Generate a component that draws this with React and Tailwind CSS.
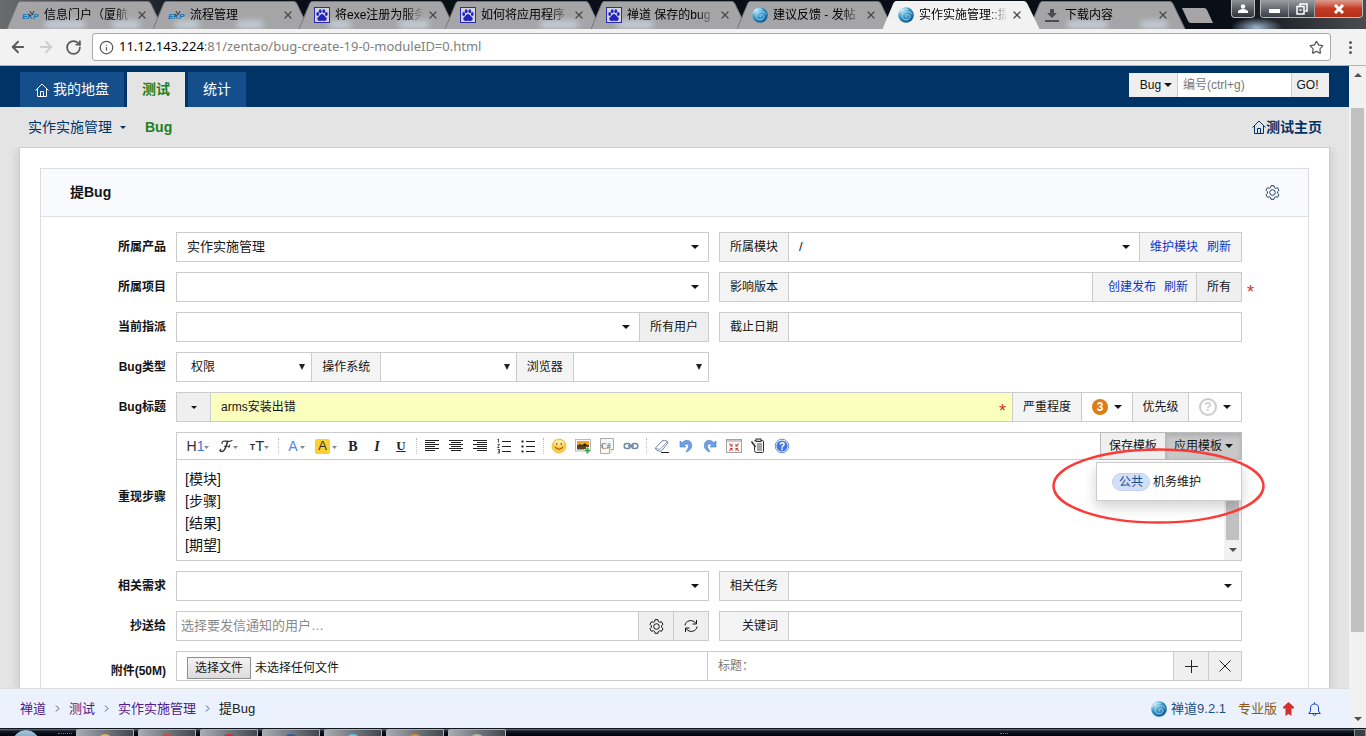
import { ArrowLeft, ArrowRight, Info, RotateCw, Star, X } from 'lucide-react';

function PawIcon() {
  return (
    <svg width="16" height="16" viewBox="0 0 16 16" className="shrink-0">
      <rect x="0.5" y="0.5" width="15" height="15" fill="#d4d4dc" stroke="#2a2ab4" />
      <g fill="#2126c0">
        <ellipse cx="3.7" cy="7" rx="1.4" ry="1.9" />
        <ellipse cx="6.2" cy="4.2" rx="1.4" ry="1.9" />
        <ellipse cx="9.8" cy="4.2" rx="1.4" ry="1.9" />
        <ellipse cx="12.3" cy="7" rx="1.4" ry="1.9" />
        <path d="M8 7c1.2 0 1.9 1.1 2.7 2 .9.9 2.1 1.6 2 3-.1 1.6-1.5 2-2.7 1.900-.8-.1-1.3-.2-2-.2s-1.2.1-2 .2c-1.2.1-2.600-.3-2.700-1.900-.1-1.400 1.100-2.100 2-3 .8-.9 1.500-2 2.700-2z" />
      </g>
    </svg>
  );
}

function SwirlIcon() {
  return (
    <svg width="16" height="16" viewBox="0 0 16 16" className="shrink-0">
      <defs>
        <radialGradient id="swirl" cx="0.25" cy="0.2" r="0.95">
          <stop offset="0" stopColor="#c5e8f5" />
          <stop offset="0.45" stopColor="#3f9fcb" />
          <stop offset="1" stopColor="#064a8c" />
        </radialGradient>
      </defs>
      <circle cx="8" cy="8" r="7.8" fill="url(#swirl)" />
      <path d="M14 7.500C12.500 3.800 6.500 3.500 4.600 7.200c-1.200 3 1 6 4.400 5.500 2.600-.4 3.800-3 2.300-4.500-1.300-1.200-3.400-.5-3.400 1 0 .8.900 1.200 1.500.7" fill="none" stroke="#a9dcf0" strokeWidth="0.9" />
      <path d="M1 6.5C2.500 3 6.500 1.500 10 2.5" fill="none" stroke="#e3f5fb" opacity="0.7" />
    </svg>
  );
}

function EkpIcon() {
  return (
    <svg width="17" height="14" viewBox="0 0 17 14" className="shrink-0">
      <text x="0" y="11" fontSize="8" fontWeight="700" fontStyle="italic" fontFamily="Liberation Sans, sans-serif" fill="#1478bd">EKP</text>
      <path d="M6 6l3 2M8 3l1.5 3M12 3l-2 4" stroke="#333" />
    </svg>
  );
}

function DownloadIcon() {
  return (
    <svg width="16" height="16" viewBox="0 0 16 16" className="shrink-0" fill="#4c4c4c">
      <path d="M6 2h4v4h3L8 11 3 6h3zM1 13h14v2H1z" />
    </svg>
  );
}

const favicons = { ekp: EkpIcon, paw: PawIcon, swirl: SwirlIcon, download: DownloadIcon };

// glow: where the desktop shines through the glass of a tab
const browserTabs = [
  { title: '信息门户（厦航', icon: 'ekp', glow: [[38, 40], [105, 28]] },
  { title: '流程管理', icon: 'ekp', glow: [[22, 24], [84, 26]] },
  { title: '将exe注册为服务', icon: 'paw', glow: [[30, 22], [100, 30]] },
  { title: '如何将应用程序', icon: 'paw', glow: [[95, 38]] },
  { title: '禅道 保存的bug', icon: 'paw', glow: [[26, 36]] },
  { title: '建议反馈 - 发帖', icon: 'swirl' },
  { title: '实作实施管理::提', icon: 'swirl', active: true },
  { title: '下载内容', icon: 'download', glow: [[38, 40], [112, 26]] },
];

function BrowserTab({ title, icon, active, glow = [] }) {
  const Icon = favicons[icon];
  return (
    <div className={`relative -mr-[14px] h-7 w-[160px] shrink-0 ${active ? 'z-10' : ''}`}>
      <svg className="absolute inset-0 h-full w-full" viewBox="0 0 160 28" preserveAspectRatio="none">
        <path d="M0 28L11 2Q12 .5 13 .5H141Q143 .5 144 3L156 28" fill={active ? '#f2f2f2' : '#a5a5a7'} stroke={active ? '#f2f2f2' : '#77777a'} />
        {glow.map(([x, width]) => <rect key={x} x={x} y="20" width={width} height="7" rx="3" fill="#c9d3dc" className="blur-[3px]" />)}
      </svg>
      <div className="relative flex h-full items-center pl-[15px]">
        <Icon />
        <span className="ml-[5px] w-[88px] mask-r-from-80% text-[12px] whitespace-nowrap text-black">{title}</span>
        <button aria-label={`关闭 ${title}`} className="ml-1"><X size={12} strokeWidth={2.5} className="text-[#4a4a4a]" /></button>
      </div>
    </div>
  );
}

function WindowControls() {
  return (
    <div className="mr-[3px] ml-auto flex h-[18px] gap-[5px] self-start">
      <button aria-label="用户" className="flex w-6 items-center justify-center rounded-b border border-t-0 border-[#b9bcc0] bg-linear-to-b from-[#8d9298] to-[#2f343b]">
        <svg width="10" height="9" viewBox="0 0 10 9" fill="#fff"><circle cx="5" cy="2.5" r="2.2" /><path d="M0 9V7q2-2 5-2t5 2v2z" /></svg>
      </button>
      <div className="flex overflow-hidden rounded-b border border-t-0 border-[#b9bcc0]">
        <button aria-label="最小化" className="flex w-7 items-center justify-center border-r border-[#9a9da1] bg-linear-to-b from-[#9a9ea3] to-[#3a3f45]">
          <span className="mt-1 h-1 w-[11px] bg-white" />
        </button>
        <button aria-label="还原" className="flex w-[26px] items-center justify-center border-r border-[#9a9da1] bg-linear-to-b from-[#9a9ea3] to-[#3a3f45]">
          <svg width="12" height="12" viewBox="0 0 12 12" fill="none" stroke="#fff" strokeWidth="1.5"><path d="M4 3V1h7v7H9" /><rect x="1" y="3.5" width="7" height="7.5" /><path d="M3.5 7h2" /></svg>
        </button>
        <button aria-label="关闭" className="flex w-[47px] items-center justify-center bg-linear-to-b from-[#dc9a8d] via-[#c23a22] to-[#b5301a]">
          <svg width="12" height="10" viewBox="0 0 12 10"><path d="M2 1l8 8M10 1L2 9" stroke="#fff" strokeWidth="3" /></svg>
        </button>
      </div>
    </div>
  );
}

function BrowserChrome() {
  return (
    <header className="shrink-0">
      <div className="flex h-[29px] items-end bg-[radial-gradient(ellipse_22px_12px_at_75%_90%,#8fa9c4,transparent),radial-gradient(ellipse_26px_10px_at_92%_95%,#9fb4cc,transparent),linear-gradient(to_right,#6a6d70,#0a0e16_15%,#0a0e16_90%,#4a4d50)] pl-[7px]">
        {browserTabs.map((tab) => <BrowserTab key={tab.title} {...tab} />)}
        <svg width="34" height="17" viewBox="0 0 34 17" className="mb-[5px] ml-1.5 shrink-0">
          <path d="M1 1h22q2 0 3 2l6 13H10q-2 0-3-2z" fill="#a5a5a7" />
        </svg>
        <WindowControls />
      </div>
      <div className="flex h-[37px] items-center border-b border-[#b4b4b4] bg-[#f2f2f2] pr-3">
        <button aria-label="后退" className="ml-[9px]"><ArrowLeft size={18} strokeWidth={2.5} className="text-[#5a5a5a]" /></button>
        <button aria-label="前进" className="ml-2.5"><ArrowRight size={18} strokeWidth={2.5} className="text-[#cfcfcf]" /></button>
        <button aria-label="刷新" className="ml-2.5"><RotateCw size={17} strokeWidth={2.5} className="text-[#5a5a5a]" /></button>
        <div className="ml-2.5 flex h-7 flex-1 items-center rounded-[3px] border border-[#a9a9a9] bg-white px-1.5">
          <Info size={15} className="text-[#5a5a5a]" />
          <div className="ml-[5px] flex-1 font-['Noto_Sans',sans-serif] text-[13px] text-[#808080]">
            <span className="text-black">11.12.143.224</span>:81/zentao/bug-create-19-0-moduleID=0.html
          </div>
          <button aria-label="收藏"><Star size={15} className="text-[#5a5a5a]" /></button>
        </div>
        <button aria-label="菜单" className="ml-[15px] flex w-2 flex-col items-center gap-[2px]">
          <span className="size-[3px] rounded-full bg-[#5a5a5a]" />
          <span className="size-[3px] rounded-full bg-[#5a5a5a]" />
          <span className="size-[3px] rounded-full bg-[#5a5a5a]" />
        </button>
      </div>
    </header>
  );
}

function Caret({ small }) {
  return small
    ? <svg width="6" height="3" viewBox="0 0 6 3" className="inline-block shrink-0 fill-current"><path d="M0 0h6L3 3z" /></svg>
    : <svg width="8" height="4" viewBox="0 0 8 4" className="inline-block shrink-0 fill-current"><path d="M0 0h8L4 4z" /></svg>;
}

function HomeIcon() {
  return (
    <svg width="14" height="14" viewBox="0 0 14 14" fill="none" stroke="currentColor" className="shrink-0">
      <path d="M.5 7.5L7 1l6.5 6.5M2.5 6v7.5h9V6M5.5 13.5v-5h3v5" />
    </svg>
  );
}

function GearIcon() {
  return (
    <svg width="15" height="15" viewBox="0 0 15 15" fill="none" stroke="currentColor">
      <path d="M6 .7h3l.4 1.900 1.200.7 1.900-.6 1.500 2.600-1.400 1.400v1.600l1.400 1.400-1.500 2.600-1.900-.6-1.200.7-.4 1.900H6l-.4-1.900-1.200-.7-1.900.6L1 9.700l1.400-1.400V6.700L1 5.300l1.500-2.600 1.900.6 1.200-.7z" strokeLinejoin="round" />
      <circle cx="7.5" cy="7.5" r="2.8" />
    </svg>
  );
}

function Group({ children }) {
  return <div className="flex h-[30px] min-w-0 flex-1 divide-x divide-[#ccc] border border-[#ccc] bg-white">{children}</div>;
}

function Cell({ children, htmlFor }) {
  return <label htmlFor={htmlFor} className="flex w-[69px] shrink-0 items-center justify-end bg-[#f4f4f4] pr-2.5">{children}</label>;
}

function Picker({ id, value = '', native }) {
  return (
    <div className="relative flex min-w-0 flex-1">
      <select id={id} className={`w-full appearance-none bg-transparent outline-none ${native ? 'pl-[14px] text-[12px]' : 'pl-2.5 text-[13px]'}`}>
        <option>{value}</option>
      </select>
      <span className={`pointer-events-none absolute inset-y-0 flex items-center ${native ? 'right-1.5' : 'right-[9px]'}`}>
        {native ? <svg width="6" height="6" viewBox="0 0 6 6"><path d="M0 0h6L3 6z" fill="#222" /></svg> : <Caret />}
      </span>
    </div>
  );
}

function Row({ label, htmlFor, children, className = 'items-center' }) {
  return (
    <div className={`flex ${className}`}>
      <label htmlFor={htmlFor} className="w-[125px] shrink-0 text-right font-bold">{label}</label>
      <div className="ml-2.5 min-w-0 flex-1">{children}</div>
    </div>
  );
}

function Pair({ children }) {
  return <div className="grid grid-cols-[533fr_523fr] gap-2.5">{children}</div>;
}

const greyButton = 'flex shrink-0 items-center justify-center bg-[#efefef]';

function Tool({ label, wide, children }) {
  return <button type="button" aria-label={label} className={`flex h-full shrink-0 items-center justify-center ${wide || 'w-6'}`}>{children}</button>;
}

function Separator() {
  return <span className="flex h-4 w-[7px] shrink-0 justify-center"><span className="border-l border-dotted border-[#bbb]" /></span>;
}

function Lines({ rows }) {
  return (
    <svg width="16" height="16" viewBox="0 0 16 16" fill="none" stroke="#222" shapeRendering="crispEdges">
      {rows.map(([x1, x2], i) => <path key={i} d={`M${x1} ${2.5 + i * 2}H${x2}`} />)}
    </svg>
  );
}

const toolCaret = <svg width="5" height="3" viewBox="0 0 5 3" className="mt-0.5 shrink-0"><path d="M0 0h5L2.5 3z" fill="#888" /></svg>;

function EditorToolbar() {
  return (
    <div className="flex h-[27px] items-center border-b border-[#ccc] pl-1.5">
      <Tool label="标题" wide="w-[30px]"><span className="text-[14px] text-[#333]">H<span className="text-[#3a78e0]">1</span></span>{toolCaret}</Tool>
      <Tool label="字体" wide="w-[31px]">
        <svg width="14" height="14" viewBox="0 0 14 14" fill="none" stroke="#333" strokeLinecap="round">
          <path d="M3 4.5C3 2 5 1.800 7 2.200s4 .5 6-.7" strokeWidth="1.2" /><path d="M8.5 2.5C7.5 6 6.5 12 3 12.5c-1.5.2-2.200-.8-1.5-1.800" strokeWidth="1.6" /><path d="M5.5 7.3h5M10.8 6l-.8 2.5" />
        </svg>
        {toolCaret}
      </Tool>
      <Tool label="字号" wide="w-[31px]"><span className="mt-1 text-[9px] font-bold text-[#333]">T</span><span className="text-[15px] text-[#333]">T</span>{toolCaret}</Tool>
      <Separator />
      <Tool label="文字颜色" wide="w-[29px]"><span className="mr-0.5 text-[14px] text-[#4a86ee]">A</span>{toolCaret}</Tool>
      <Tool label="背景颜色" wide="w-[30px]"><span className="mr-0.5 flex size-[15px] items-center justify-center rounded-[2px] bg-[#fdd02f] text-[13px] text-[#333]">A</span>{toolCaret}</Tool>
      <Tool label="粗体"><span className="font-['Liberation_Serif',serif] text-[14px] font-black text-[#222]">B</span></Tool>
      <Tool label="斜体"><span className="font-['Liberation_Serif',serif] text-[14px] font-bold text-[#222] italic">I</span></Tool>
      <Tool label="下划线"><span className="font-['Liberation_Serif',serif] text-[13px] font-bold text-[#222] underline">U</span></Tool>
      <Separator />
      <Tool label="左对齐"><Lines rows={[[1, 15], [1, 11], [1, 15], [1, 11], [1, 15], [1, 11]]} /></Tool>
      <Tool label="居中"><Lines rows={[[1, 15], [3, 13], [1, 15], [3, 13], [1, 15], [3, 13]]} /></Tool>
      <Tool label="右对齐"><Lines rows={[[1, 15], [5, 15], [1, 15], [5, 15], [1, 15], [5, 15]]} /></Tool>
      <Tool label="编号">
        <svg width="16" height="16" viewBox="0 0 16 16" fill="none" stroke="#222">
          <path d="M6 3.5h9M6 8.5h9M6 13.5h9" />
          <path d="M1.5 1.5l1-.5v3.5M1.5 6.5h2L1.5 9.5h2M1.5 11.5h2v3.5h-2M2 13.2h1.5" strokeWidth="0.8" />
        </svg>
      </Tool>
      <Tool label="项目符号">
        <svg width="16" height="16" viewBox="0 0 16 16" stroke="#222">
          <path d="M6 3.5h9M6 8.5h9M6 13.5h9" />
          <path d="M1.5 2.5h2v2h-2zM1.5 7.5h2v2h-2zM1.5 12.5h2v2h-2z" fill="#222" stroke="none" />
        </svg>
      </Tool>
      <Separator />
      <Tool label="表情">
        <svg width="16" height="16" viewBox="0 0 16 16">
          <circle cx="8" cy="8" r="7" fill="#fbcb42" stroke="#e8a93c" strokeWidth="0.6" /><ellipse cx="8" cy="5" rx="5" ry="3" fill="#fde9a0" />
          <path d="M5.8 5v2M10.2 5v2M4 9q4 4.5 8 0" stroke="#7a4a10" strokeWidth="1.1" fill="none" />
        </svg>
      </Tool>
      <Tool label="图片">
        <svg width="16" height="16" viewBox="0 0 16 16">
          <rect x="0.5" y="1.5" width="15" height="11.5" fill="#fff" stroke="#b8b8b8" /><rect x="2" y="3" width="12" height="5" fill="#efa91e" /><rect x="2" y="7" width="12" height="4.5" fill="#5b4220" /><path d="M3 7.5l2-1 2 1 3-2 2 2" stroke="#5b4220" />
          <path d="M12.5 9v7M9 12.5h7" stroke="#fff" strokeWidth="3" /><path d="M12.5 9.500v6M9.500 12.500h6" stroke="#3da54a" strokeWidth="2" />
        </svg>
      </Tool>
      <Tool label="代码">
        <svg width="16" height="16" viewBox="0 0 16 16">
          <path d="M1.5.5h13v11l-4 4h-9z" fill="#f7f7f5" stroke="#aaa" /><path d="M14.5 11.5h-4v4" fill="#fff" stroke="#aaa" />
          <text x="2" y="10.5" fontSize="8" fontWeight="700" fontFamily="Liberation Serif, serif" fill="#8f6a3a">C#</text>
        </svg>
      </Tool>
      <Tool label="链接">
        <svg width="16" height="16" viewBox="0 0 16 16" fill="none" stroke="#6f86a8" strokeWidth="1.5">
          <rect x="1.2" y="5.5" width="6" height="5" rx="2.5" /><rect x="8.8" y="5.5" width="6" height="5" rx="2.5" /><path d="M5 8h6" />
        </svg>
      </Tool>
      <Separator />
      <Tool label="清除格式">
        <svg width="16" height="16" viewBox="0 0 16 16">
          <path d="M1.5 10L8 3q1-.8 2.500-.6l2.500.8q1.500.6.7 2L8 12.500q-1 1-2.500.8L2.500 12q-1.500-.8-1-2z" fill="#fff" stroke="#7484a8" /><path d="M2 10.5l4 1 7-7.5" fill="none" stroke="#7484a8" strokeWidth="0.8" /><path d="M7 14.500h8" stroke="#222" />
        </svg>
      </Tool>
      <Tool label="撤销">
        <svg width="16" height="16" viewBox="0 0 16 16"><path d="M2 3v6h6L6.200 7C9 5 11.500 6.500 10.300 9.800L8 14c5-1.600 6.700-5.500 5.200-9C11.500 1.500 7 1.500 4.200 4.800z" fill="#6d9ee8" stroke="#4a7cc9" strokeWidth="0.6" /></svg>
      </Tool>
      <Tool label="重做">
        <svg width="16" height="16" viewBox="0 0 16 16"><path d="M14 3v6H8l1.800-2C7 5 4.500 6.500 5.700 9.800L8 14C3 12.400 1.300 8.500 2.800 5 4.500 1.500 9 1.500 11.800 4.800z" fill="#6d9ee8" stroke="#4a7cc9" strokeWidth="0.6" /></svg>
      </Tool>
      <Tool label="全屏">
        <svg width="16" height="16" viewBox="0 0 16 16">
          <rect x="0.5" y="1.5" width="15" height="13" fill="#fafafa" stroke="#a3a3a3" /><path d="M1 3h14" stroke="#c9c9c9" strokeWidth="2" />
          <path d="M3 5.500l2.500 2M13 5.500l-2.500 2M3 13l2.500-2M13 13l-2.500-2" stroke="#c63a2e" /><path d="M6.500 5.500v3h-3zM9.500 5.500v3h3zM6.500 13v-3h-3zM9.500 13v-3h3z" fill="#c63a2e" />
        </svg>
      </Tool>
      <Tool label="源码">
        <svg width="16" height="16" viewBox="0 0 16 16" fill="none" stroke="#333">
          <path d="M4.500 2.500h8q1 0 1 1v10q0 1-1 1h-6q-2 0-2-2V8" fill="#f1f1f1" /><rect x="6" y="1" width="5" height="2.500" fill="#ccc" /><path d="M7 6h5M7 8h5M7 10h5M7 12h5" strokeWidth="0.8" /><path d="M1.500 3.500l4 5.500" strokeWidth="1.6" />
        </svg>
      </Tool>
      <Tool label="帮助">
        <svg width="16" height="16" viewBox="0 0 16 16">
          <circle cx="8" cy="8" r="6.8" fill="#fff" stroke="#3a6fd0" strokeWidth="0.8" /><circle cx="8" cy="8" r="5.6" fill="#3f78dc" />
          <text x="5" y="11.8" fontSize="10" fontWeight="700" fontFamily="Liberation Sans, sans-serif" fill="#fff">?</text>
        </svg>
      </Tool>
    </div>
  );
}

function Editor() {
  return (
    <div className="relative h-[129px] border border-[#ccc]">
      <EditorToolbar />
      <div className="flex h-[100px]">
        <div className="flex-1 pt-2 pl-2 text-[14px] leading-[22px]">
          <p>[模块]</p>
          <p>[步骤]</p>
          <p>[结果]</p>
          <p>[期望]</p>
        </div>
        <div className="flex w-[17px] flex-col items-center bg-[#f1f1f1] pt-4 text-[#505050]">
          <div className="h-16 w-[13px] bg-[#c1c1c1]" />
          <div className="flex flex-1 items-center"><Caret /></div>
        </div>
      </div>
      <div className="absolute -top-px -right-px flex h-7 border border-[#bbb]">
        <button type="button" className="w-[65px] border-r border-[#bbb] bg-[#efefef]">保存模板</button>
        <button type="button" className="flex w-[75px] items-center justify-center gap-[3px] bg-[#c8c8c8] shadow-[inset_0_3px_5px_rgba(0,0,0,0.125)]">应用模板<Caret /></button>
      </div>
      <div className="absolute top-[29px] -right-px flex h-[39px] w-[146px] items-center border border-[#ccc] bg-white pl-[15px] shadow-[0_6px_12px_rgba(0,0,0,0.18)]">
        <span className="rounded-full border border-[#c3d1ee] bg-[#d1dff8] px-1.5 leading-4 text-[#1a4f8f]">公共</span>
        <a href="#template" className="ml-[3px]">机务维护</a>
      </div>
      <svg width="213" height="76" viewBox="0 0 213 76" className="pointer-events-none absolute top-[15px] -right-6">
        <ellipse cx="106.5" cy="38" rx="105" ry="36.5" fill="none" stroke="#fb3b37" strokeWidth="2.5" />
      </svg>
    </div>
  );
}

function BugForm() {
  return (
    <form className="flex flex-col gap-2.5 pt-[15px] pr-[66px]" onSubmit={(e) => e.preventDefault()}>
      <Row label="所属产品" htmlFor="product">
        <Pair>
          <Group><Picker id="product" value="实作实施管理" /></Group>
          <Group>
            <Cell htmlFor="module">所属模块</Cell>
            <Picker id="module" value="/" />
            <div className="flex items-center gap-[9px] bg-[#f4f4f4] px-2.5 text-[#0a39c9]">
              <a href="#module">维护模块</a><a href="#refresh">刷新</a>
            </div>
          </Group>
        </Pair>
      </Row>
      <Row label="所属项目" htmlFor="project">
        <Pair>
          <Group><Picker id="project" /></Group>
          <div className="relative flex">
            <Group>
              <Cell htmlFor="build">影响版本</Cell>
              <input id="build" className="min-w-0 flex-1 px-2 outline-none" />
              <div className="flex items-center gap-2 bg-[#f4f4f4] pr-2 pl-[15px] text-[#0a39c9]">
                <a href="#release">创建发布</a><a href="#refresh">刷新</a>
              </div>
              <button type="button" className={`${greyButton} w-11`}>所有</button>
            </Group>
            <span className="absolute top-2 -right-3 text-[18px] leading-6 text-[#d2322d]">*</span>
          </div>
        </Pair>
      </Row>
      <Row label="当前指派" htmlFor="assigned">
        <Pair>
          <Group><Picker id="assigned" /><button type="button" className={`${greyButton} w-[68px]`}>所有用户</button></Group>
          <Group><Cell htmlFor="deadline">截止日期</Cell><input id="deadline" className="min-w-0 flex-1 px-2 outline-none" /></Group>
        </Pair>
      </Row>
      <Row label="Bug类型" htmlFor="type">
        <Pair>
          <Group>
            <Picker native id="type" value="权限" />
            <Cell htmlFor="os">操作系统</Cell>
            <Picker native id="os" />
            <label htmlFor="browser" className="flex w-[57px] shrink-0 items-center justify-center bg-[#f4f4f4]">浏览器</label>
            <Picker native id="browser" />
          </Group>
        </Pair>
      </Row>
      <Row label="Bug标题" htmlFor="title">
        <div className="flex">
          <Group>
            <button type="button" aria-label="颜色" className={`${greyButton} w-[34px]`}><Caret small /></button>
            <div className="relative flex flex-1">
              <input id="title" defaultValue="arms安装出错" className="w-full bg-[#faffbd] px-2.5 outline-none" />
              <span className="absolute top-1.5 right-1.5 text-[18px] leading-6 text-[#d2322d]">*</span>
            </div>
            <span className="flex w-[69px] items-center justify-center bg-[#f4f4f4]">严重程度</span>
            <button type="button" className="flex w-[51px] items-center justify-center gap-1.5">
              <span className="size-4 rounded-full bg-[#dd7d15] text-[12px] leading-4 font-bold text-white">3</span><Caret />
            </button>
            <span className="flex w-14 items-center justify-center bg-[#f4f4f4]">优先级</span>
            <button type="button" className="flex w-[52px] items-center justify-center gap-1.5">
              <span className="size-[18px] rounded-full border-2 border-[#ccc] text-[12px] leading-[14px] font-bold text-[#ccc]">?</span><Caret />
            </button>
          </Group>
        </div>
      </Row>
      <Row label="重现步骤"><Editor /></Row>
      <Row label="相关需求" htmlFor="story">
        <Pair>
          <Group><Picker id="story" /></Group>
          <Group><Cell htmlFor="task">相关任务</Cell><Picker id="task" /></Group>
        </Pair>
      </Row>
      <Row label="抄送给" htmlFor="mailto">
        <Pair>
          <Group>
            <input id="mailto" placeholder="选择要发信通知的用户…" className="min-w-0 flex-1 px-1 text-[13px] outline-none placeholder:text-[#8a8a8a]" />
            <button type="button" aria-label="设置" className={`${greyButton} w-[35px]`}><GearIcon /></button>
            <button type="button" aria-label="刷新" className={`${greyButton} w-[34px]`}>
              <svg width="16" height="16" viewBox="0 0 16 16" fill="none" stroke="currentColor"><path d="M2 7.5C2 2.5 10 .5 13 5.5M14 8.5c0 5-8 7-11 2M13.5 2v4h-4M2.5 14v-4h4" /></svg>
            </button>
          </Group>
          <Group><Cell htmlFor="keywords">关键词</Cell><input id="keywords" className="min-w-0 flex-1 px-2 outline-none" /></Group>
        </Pair>
      </Row>
      <Row label="附件(50M)" htmlFor="file" className="items-end leading-5">
        <Group>
          <div className="flex flex-1 items-center pt-1 pl-2.5">
            <input id="file" type="file" className="sr-only" />
            <label htmlFor="file" className="h-[22px] border border-[#8f8f8f] bg-linear-to-b from-[#f4f4f4] to-[#dcdcdc] px-[7px]">选择文件</label>
            <span className="ml-1">未选择任何文件</span>
          </div>
          <input aria-label="标题" placeholder="标题：" className="w-[466px] px-2.5 outline-none placeholder:text-[#777]" />
          <button type="button" aria-label="添加" className={`${greyButton} w-[35px]`}><svg width="13" height="13" viewBox="0 0 13 13" stroke="#222"><path d="M6.5 0v13M0 6.5h13" /></svg></button>
          <button type="button" aria-label="删除" className={`${greyButton} w-8`}><svg width="12" height="12" viewBox="0 0 12 12" stroke="#222"><path d="M.5.5l11 11M11.500.5l-11 11" /></svg></button>
        </Group>
      </Row>
    </form>
  );
}

function Chevron() {
  return <svg width="5" height="7" viewBox="0 0 5 7" className="mx-[9px]" fill="none" stroke="#4a6078"><path d="M1 .5l3 3-3 3" /></svg>;
}

function Page() {
  return (
    <div className="flex min-w-0 flex-1 flex-col bg-[#e4e4e4]">
      <nav className="flex h-[41px] shrink-0 items-end gap-[3px] bg-[#003366] px-5 text-[14px]">
        <a href="#my" className="flex h-[35px] items-center gap-1 bg-[#144f8c] px-[15px] text-white"><HomeIcon />我的地盘</a>
        <a href="#qa" className="flex h-[35px] items-center bg-[#e4e4e4] px-[15px] font-bold text-[#218021]">测试</a>
        <a href="#report" className="flex h-[35px] items-center bg-[#144f8c] px-[15px] text-white">统计</a>
        <div className="mb-2.5 ml-auto flex h-6 text-[12px]">
          <button className="flex w-12 items-center justify-center gap-[3px] bg-[#efefef] pl-1.5">Bug<Caret /></button>
          <input aria-label="编号" placeholder="编号(ctrl+g)" className="w-[115px] border-x border-[#ccc] bg-white px-[5px] outline-none placeholder:text-[#777]" />
          <button className="w-[37px] bg-[#efefef] pr-1.5">GO!</button>
        </div>
      </nav>
      <div className="flex h-10 shrink-0 items-center pr-[27px] pl-7 text-[14px] text-[#003366]">
        <button className="flex items-center gap-2">实作实施管理<Caret small /></button>
        <a href="#bug" className="ml-[19px] font-bold text-[#218021]">Bug</a>
        <a href="#home" className="ml-auto flex items-center font-bold"><HomeIcon />测试主页</a>
      </div>
      <main className="min-h-0 flex-1 overflow-hidden px-[19px]">
        <div className="h-full border border-b-0 border-[#ccc] bg-white px-5 pt-5 shadow-[0_2px_10px_rgba(0,0,0,0.15)]">
          <section className="h-full border border-b-0 border-[#ddd]">
            <div className="flex h-12 items-center justify-between border-b border-[#e0e0e0] bg-[#f8fafe] pr-7 pl-[29px]">
              <h1 className="text-[14px] font-bold">提Bug</h1>
              <button aria-label="设置" className="text-[#24425f]"><GearIcon /></button>
            </div>
            <BugForm />
          </section>
        </div>
      </main>
      <footer className="z-10 flex h-10 shrink-0 items-center border-t border-[#ddd] bg-[#ebf2fd] pr-7 pl-5 text-[13px] text-[#551a8b]">
        <a href="#zentao">禅道</a><Chevron />
        <a href="#qa">测试</a><Chevron />
        <a href="#product">实作实施管理</a><Chevron />
        <span className="text-[#222]">提Bug</span>
        <div className="ml-auto flex items-center">
          <SwirlIcon />
          <a href="#about" className="ml-1 text-[#1a4f85]">禅道9.2.1</a>
          <a href="#pro" className="ml-3 flex items-center gap-1.5 text-[#8a5a20]">
            专业版
            <svg width="11" height="14" viewBox="0 0 11 14"><path d="M5.5 0L11 5v1.500H8.500V14l-3-2-3 2V6.500H0V5z" fill="#d2322d" /></svg>
          </a>
          <button aria-label="通知" className="ml-3.5">
            <svg width="13" height="14" viewBox="0 0 13 14" fill="none" stroke="#1446d0"><path d="M.7 11.5h11.600L10.500 9V6C10.500 3.500 9 2 6.500 2S2.500 3.500 2.500 6v3zM5 11.500q0 2 1.500 2t1.500-2M6.500 2V.3" /></svg>
          </button>
        </div>
      </footer>
    </div>
  );
}

function Scrollbar() {
  return (
    <div className="flex w-[17px] shrink-0 flex-col items-center bg-[#f1f1f1] text-[#505050]">
      <svg width="8" height="4" viewBox="0 0 8 4" className="mt-[7px] fill-current"><path d="M0 4h8L4 0z" /></svg>
      <div className="mt-[31px] mb-[85px] w-[13px] flex-1 bg-[#c1c1c1]" />
      <svg width="8" height="4" viewBox="0 0 8 4" className="mb-[7px] fill-current"><path d="M0 0h8L4 4z" /></svg>
    </div>
  );
}

const taskIcons = ['#e6b34a', '#d9443a', '#c9302a', '#2a5caa', '#5cc8ea', '#e58a2a', '#a9bfa0'];

function Taskbar() {
  return (
    <div className="flex h-2 shrink-0 items-start gap-1 overflow-hidden border-t border-[#10161f] bg-linear-to-b from-[#6b7885] via-[#141c28] via-30% to-[#000208]">
      <div className="mt-px ml-3 size-7 rounded-full border border-[#9cc4d8] bg-linear-to-b from-[#a5c4d8] to-[#2c5878]" />
      <span className="mt-1 ml-3.5 w-3.5 border-t border-dotted border-[#777]" />
      {taskIcons.map((color) => (
        <div key={color} className="flex h-2 w-[58px] justify-center rounded-t-[2px] border border-b-0 border-[#aab0b6] bg-linear-to-r from-[#a9adb2] to-[#43484f]">
          <span className="mt-1 h-2 w-4 rounded-t-full" style={{ backgroundColor: color }} />
        </div>
      ))}
      <span className="mt-1 ml-[490px] w-2 border-t border-dotted border-[#777]" />
      <span className="ml-auto h-2 w-3 border border-[#8c9299] bg-[#3a3f46]" />
    </div>
  );
}

export default function App() {
  return (
    <div className="flex h-screen flex-col overflow-hidden font-['Liberation_Sans','Noto_Sans_CJK_SC',sans-serif] text-[12px] text-[#141414]">
      <BrowserChrome />
      <div className="flex min-h-0 flex-1">
        <Page />
        <Scrollbar />
      </div>
      <Taskbar />
    </div>
  );
}
